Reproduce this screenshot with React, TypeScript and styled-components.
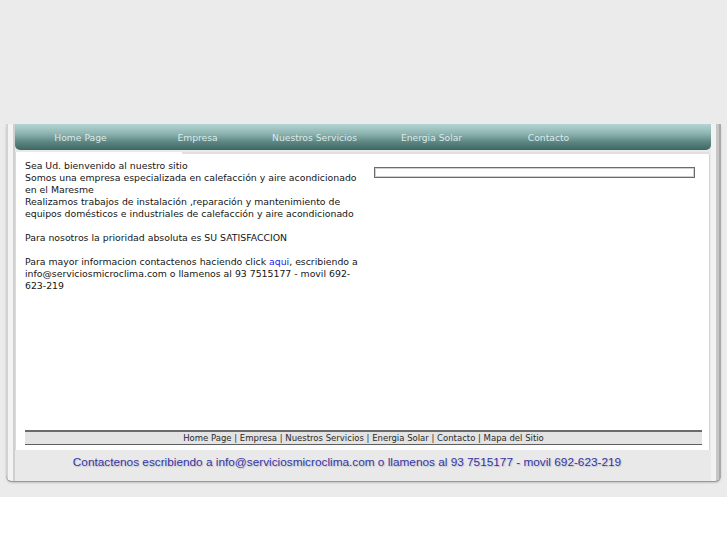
import React from "react"
import styled, { createGlobalStyle } from "styled-components"

const GlobalStyle = createGlobalStyle`
	html, body {
		margin: 0;
		padding: 0;
		background: #ffffff;
	}
`

const Page = styled.div`
	height: 497px;
	background: #ebebeb;
	padding-top: 124px;
	box-sizing: border-box;
	font-family: "DejaVu Sans", Verdana, sans-serif;
`

const Frame = styled.div`
	margin-left: 6px;
	width: 715px;
	padding: 0 10px 6px 9px;
	box-sizing: border-box;
	border-radius: 0 0 6px 6px;
	background:
		linear-gradient(to right, #d2d2d2 0, #d2d2d2 2px, #f3f3f3 2px, #f3f3f3 7px, #cfcfcf 7px, #cfcfcf 9px) left top / 9px 100% no-repeat,
		linear-gradient(to right, #f2f2f2 0, #f2f2f2 5px, #c6c6c6 5px, #c6c6c6 8px, #a9a9a9 8px, #a9a9a9 10px) right top / 10px 100% no-repeat,
		#e9e9e9;
	box-shadow: 0 1px 0 #9a9a9a, 0 2px 2px rgba(0, 0, 0, 0.18);
`

const NavBar = styled.nav`
	display: flex;
	height: 26px;
	padding: 1px 0 0 7px;
	box-sizing: border-box;
	align-items: center;
	border-radius: 0 0 5px 5px;
	background: linear-gradient(to bottom, #b3d5d3 0%, #8fb6b3 35%, #5c8582 70%, #3e6764 100%);
`

const NavItem = styled.a`
	width: 117px;
	text-align: center;
	font-size: 9.2px;
	color: #dceae9;
	text-decoration: none;
`

const Panel = styled.div`
	position: relative;
	display: flex;
	flex-direction: column;
	height: 298px;
	margin: 2px 2px 0 1px;
	padding: 8px 7px 5px 9px;
	box-sizing: border-box;
	background: #ffffff;
	border-radius: 0 4px 0 0;
	box-shadow: 1px 0 0 #d6d6d6, -1px 0 0 #dcdcdc;

	&::before {
		content: "";
		position: absolute;
		top: 0;
		left: 166px;
		right: 0;
		height: 2px;
		border-radius: 0 4px 0 0;
		background: #e0e0e0;
	}
`

const Columns = styled.div`
	flex: 1;
	display: grid;
	grid-template-columns: 340px 1fr;
	column-gap: 9px;
`

const Intro = styled.div`
	font-size: 9.33px;
	line-height: 12px;
	color: #141414;

	p {
		margin: 0 0 12px;
	}

	a {
		color: #1a1aee;
		text-decoration: none;
	}
`

const Side = styled.div`
	padding: 7px 7px 0 0;
`

const Ticker = styled.div`
	height: 9px;
	border: 1px solid #6c6c6c;
	box-shadow: inset 0 0 0 1px #d0d0d0;
	background: #ffffff;
`

const FooterLinks = styled.div`
	height: 12px;
	line-height: 12px;
	text-align: center;
	font-size: 8.5px;
	color: #2a2a2a;
	background: #e3e3e3;
	border-top: 2px solid #6a6a6a;
	border-bottom: 1px solid #5e5e5e;
`

const ContactLine = styled.div`
	height: 25px;
	line-height: 24px;
	padding-right: 32px;
	text-align: center;
	font-family: "Liberation Sans", Arial, sans-serif;
	font-size: 11.8px;
	color: #3636a0;
	text-shadow: 1px 1px 1px rgba(120, 120, 170, 0.35);
`

const navItems = ["Home Page", "Empresa", "Nuestros Servicios", "Energia Solar", "Contacto"]

const footerItems = ["Home Page", "Empresa", "Nuestros Servicios", "Energia Solar", "Contacto", "Mapa del Sitio"]

const App = () => {
	return (
		<>
			<GlobalStyle />
			<Page>
				<Frame>
					<NavBar>
						{navItems.map((item) => (
							<NavItem key={item} href="#">{item}</NavItem>
						))}
					</NavBar>
					<Panel>
						<Columns>
							<Intro>
								<p>
									Sea Ud. bienvenido al nuestro sitio<br />
									Somos una empresa especializada en calefacción y aire acondicionado en el Maresme<br />
									Realizamos trabajos de instalación ,reparación y mantenimiento de equipos domésticos e industriales de calefacción y aire acondicionado
								</p>
								<p>Para nosotros la prioridad absoluta es SU SATISFACCION</p>
								<p>
									Para mayor informacion contactenos haciendo click <a href="#">aqui</a>, escribiendo a info@serviciosmicroclima.com o llamenos al 93 7515177 - movil 692-623-219
								</p>
							</Intro>
							<Side>
								<Ticker />
							</Side>
						</Columns>
						<FooterLinks>{footerItems.join(" | ")}</FooterLinks>
					</Panel>
					<ContactLine>
						Contactenos escribiendo a info@serviciosmicroclima.com o llamenos al 93 7515177 - movil 692-623-219
					</ContactLine>
				</Frame>
			</Page>
		</>
	)
}

export default App
